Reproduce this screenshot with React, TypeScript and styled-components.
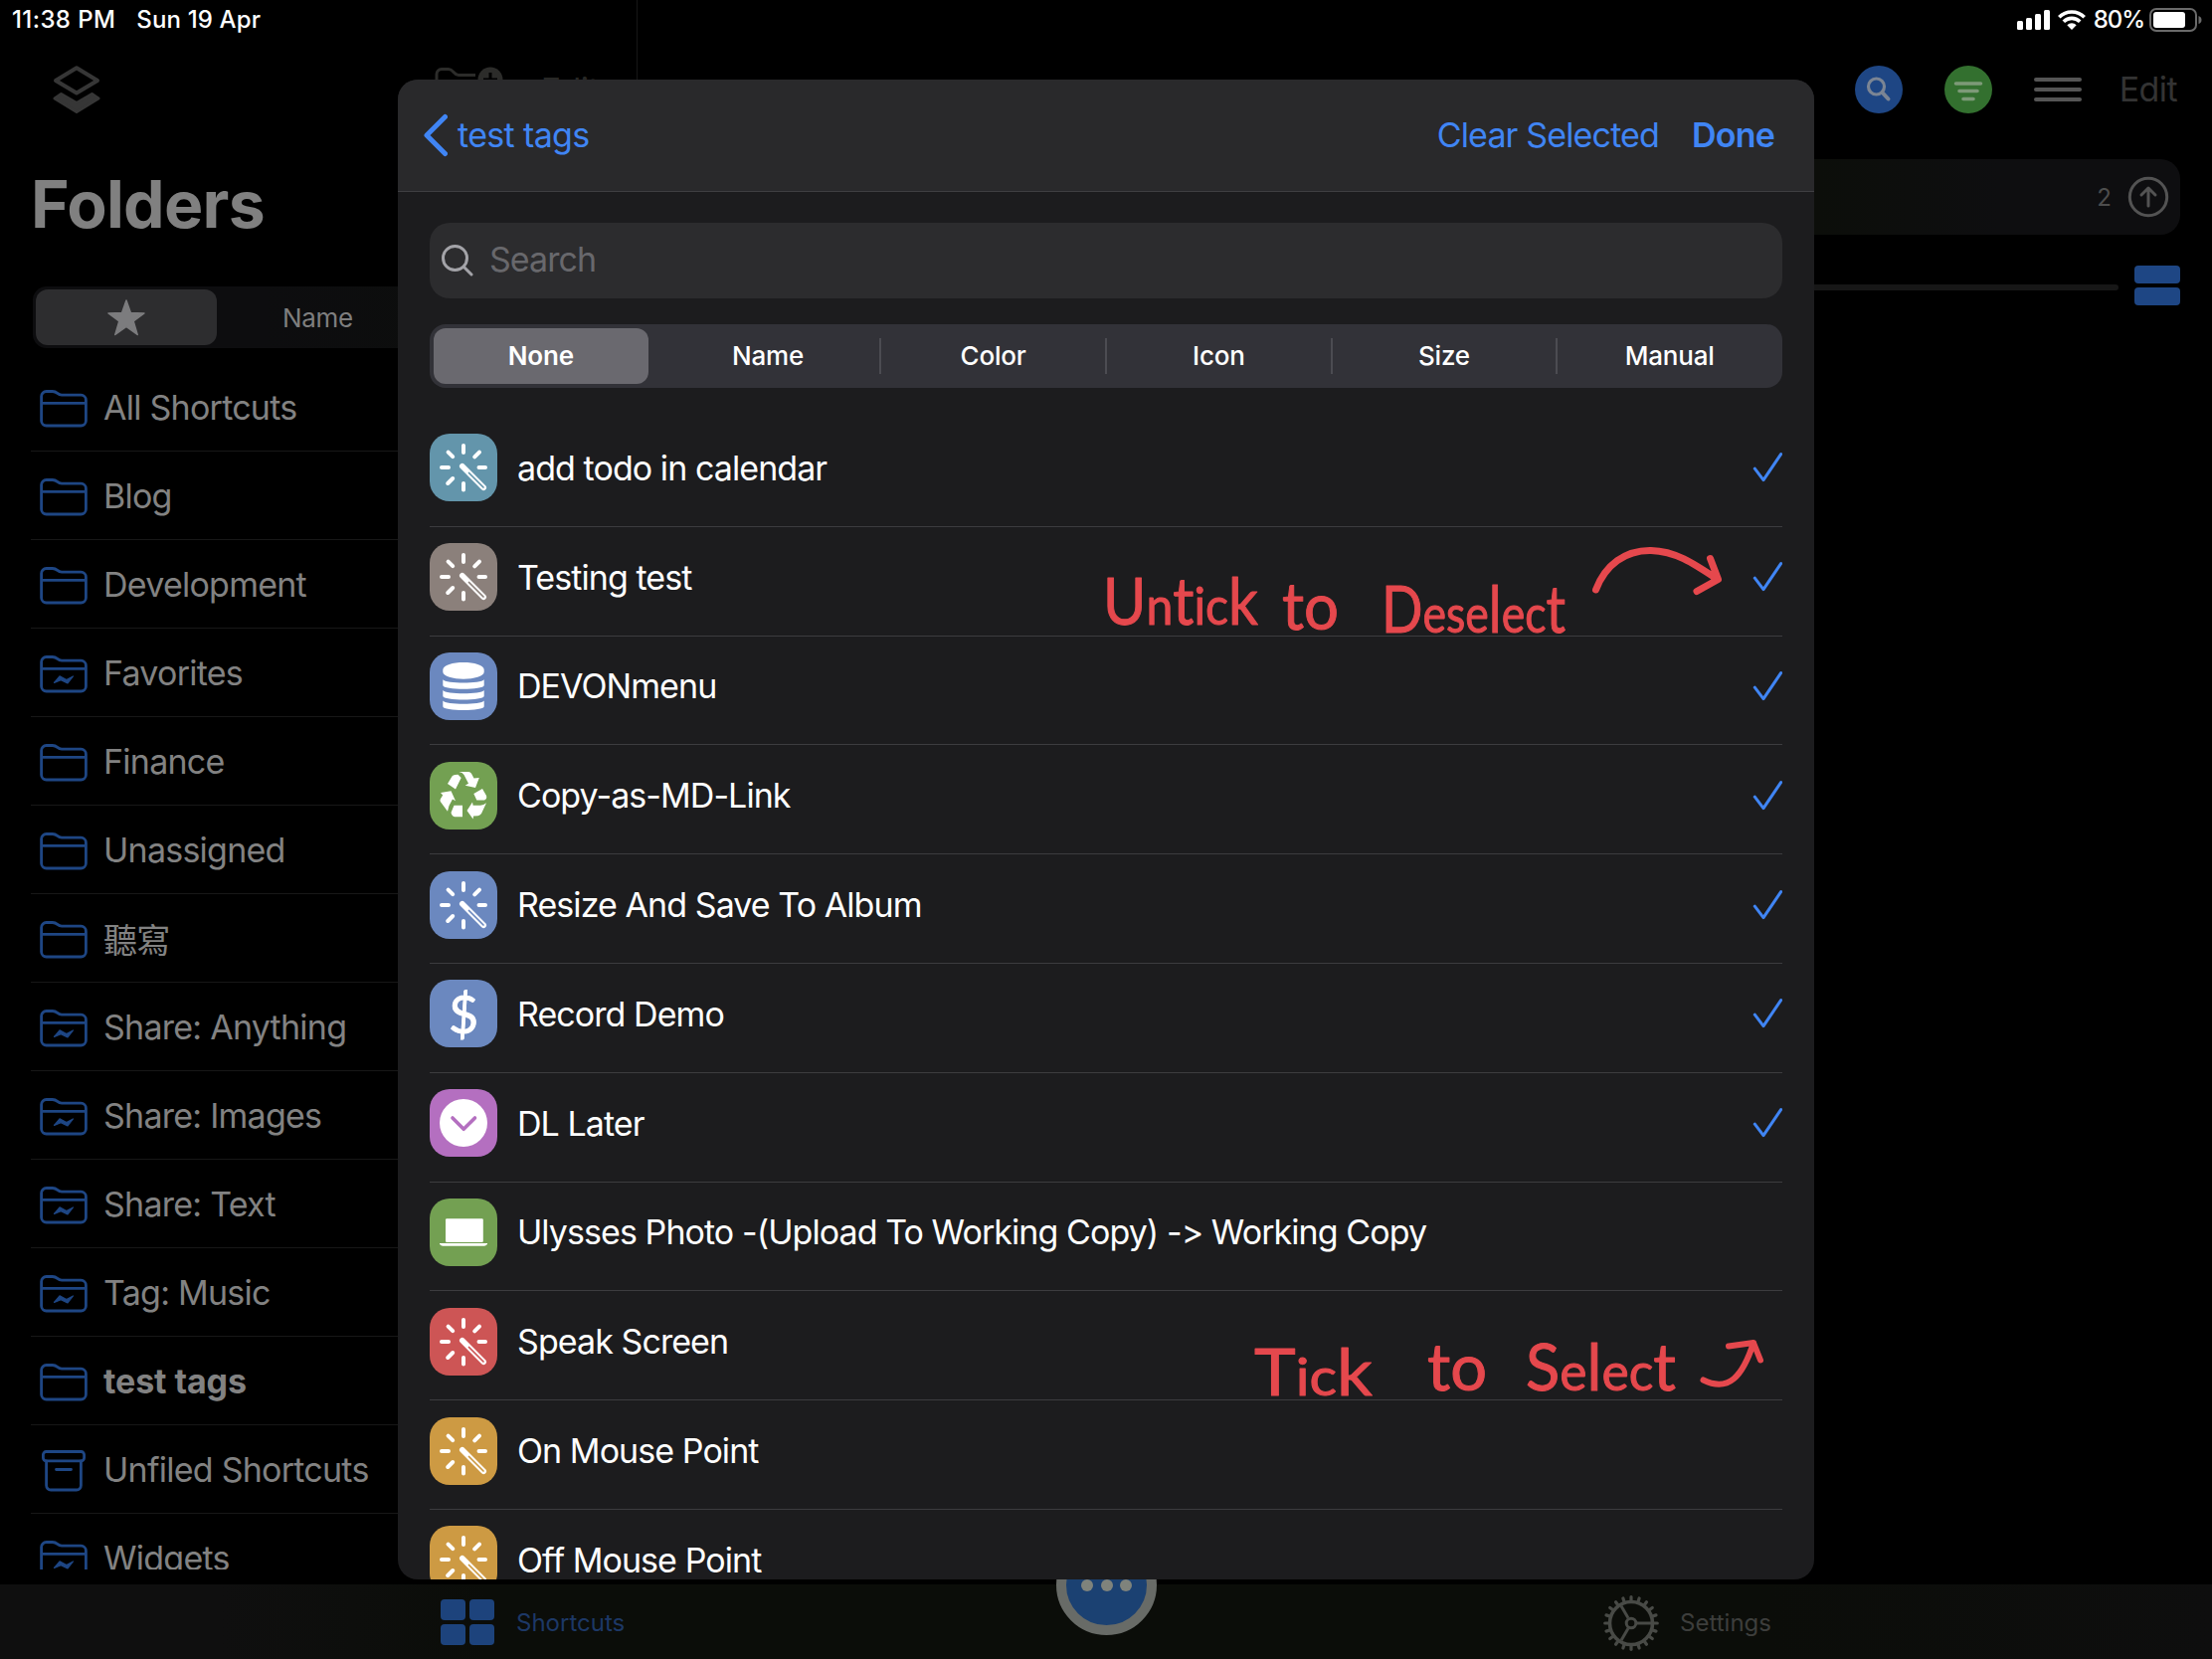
import React from "react";
import styled, { createGlobalStyle } from "styled-components";

const GlobalStyle = createGlobalStyle`
  *, *::before, *::after { box-sizing: border-box; }
  html, body { margin: 0; padding: 0; background: #000; }
  body {
    font-family: Inter, "Liberation Sans", "Noto Sans CJK TC", sans-serif;
    font-feature-settings: "calt" 0;
    overflow: hidden;
  }
  svg { display: block; flex: none; }
`;

const BLUE = "#4085f4";
const DIM_BLUE = "#1e4684";
const RED = "#e5484d";

const Screen = styled.div`
  position: relative;
  display: flex;
  flex-direction: column;
  width: 2224px;
  height: 1668px;
  background: #000;
  overflow: hidden;
`;

/* ---------- status bar ---------- */

const StatusBar = styled.header`
  position: absolute;
  z-index: 2;
  inset: 0 0 auto 0;
  display: flex;
  align-items: center;
  justify-content: space-between;
  height: 40px;
  padding: 0 9px 0 12px;
  color: #fff;
  font-size: 24px;
  font-weight: 500;
`;

const StatusGroup = styled.div<{ $gap: number }>`
  display: flex;
  align-items: center;
  gap: ${(p) => p.$gap}px;
`;

const StatusText = styled.span<{ $spacing?: number }>`
  letter-spacing: ${(p) => p.$spacing ?? 0}px;
  white-space: nowrap;
  padding-bottom: 1px;
`;

/* ---------- page behind the sheet ---------- */

const Columns = styled.div`
  display: flex;
  height: 1593px;
`;

const Sidebar = styled.aside`
  display: flex;
  flex-direction: column;
  width: 641px;
  height: 1578px;
  border-right: 1px solid #161616;
  overflow: hidden;
`;

const SidebarBar = styled.div`
  display: flex;
  align-items: center;
  flex: none;
  height: 140px;
  padding: 40px 38px 0 53px;
`;

const SidebarActions = styled.div`
  display: flex;
  align-items: center;
  gap: 37px;
  margin-left: auto;
  padding-top: 2px;
`;

const DimAction = styled.span<{ $color?: string }>`
  color: ${(p) => p.$color ?? "#333"};
  font-size: 34px;
  letter-spacing: -0.6px;
  line-height: 40px;
`;

const SidebarTitle = styled.h1`
  flex: none;
  margin: 0;
  height: 148px;
  padding: 25px 0 0 31px;
  color: #808080;
  font-size: 66px;
  font-weight: 700;
  line-height: 80px;
  letter-spacing: -0.7px;
`;

const SidebarSegments = styled.div`
  display: flex;
  flex: none;
  width: 576px;
  height: 62px;
  margin: 0 0 15px 33px;
  padding: 3px;
  border-radius: 14px;
  background: linear-gradient(90deg, #0d0d0f 40%, #0c0e0b);
`;

const SidebarSegment = styled.div<{ $active?: boolean }>`
  display: flex;
  align-items: center;
  justify-content: center;
  width: ${(p) => (p.$active ? 182 : 203)}px;
  border-radius: 12px;
  background: ${(p) => (p.$active ? "#2d2d2f" : "transparent")};
  color: #7e7e7e;
  font-size: 26px;
  letter-spacing: -0.3px;
`;

const FolderRow = styled.div<{ $bold?: boolean }>`
  display: flex;
  align-items: center;
  flex: none;
  gap: 16px;
  height: 89px;
  margin-left: 31px;
  padding-left: 9px;
  border-bottom: 1px solid #171717;
  color: #828282;
  font-size: 34px;
  font-weight: ${(p) => (p.$bold ? 700 : 400)};
  letter-spacing: ${(p) => (p.$bold ? -0.1 : -0.75)}px;
  white-space: nowrap;
  svg { margin-top: 4px; }
`;

const Main = styled.main`
  display: flex;
  flex-direction: column;
  flex: 1;
`;

const MainBar = styled.div`
  display: grid;
  grid-template-columns: 1fr auto 1fr;
  align-items: center;
  height: 160px;
  padding: 20px 35px 0 0;
`;

const MainTitle = styled.div`
  grid-column: 2;
  margin-left: 35px;
  padding-top: 2px;
  color: #6d6d6d;
  font-size: 34px;
  font-weight: 600;
  letter-spacing: -0.6px;
`;

const MainActions = styled.div`
  display: flex;
  align-items: center;
  justify-content: flex-end;
`;

const RoundButton = styled.div<{ $color: string }>`
  display: flex;
  width: 48px;
  height: 48px;
  border-radius: 50%;
  margin-right: 42px;
  background: ${(p) => p.$color};
`;

const MenuLines = styled.div`
  display: flex;
  flex-direction: column;
  gap: 6px;
  width: 48px;
  margin-right: 38px;
  span { height: 4px; border-radius: 2px; background: #555; }
`;

const RunBar = styled.div`
  display: flex;
  align-items: center;
  justify-content: flex-end;
  gap: 16px;
  height: 76px;
  margin: 0 32px;
  padding-right: 11px;
  border-radius: 20px;
  background: linear-gradient(90deg, #0c0e0a 76%, #0e0e10 88%);
  color: #4d4d4d;
  font-size: 24px;
`;

const SizeRow = styled.div`
  display: flex;
  align-items: center;
  gap: 16px;
  height: 40px;
  margin: 31px 32px 0;
`;

const Track = styled.div`
  flex: 1;
  height: 6px;
  border-radius: 3px;
  background: #171717;
  margin-top: 4px;
`;

const ViewToggle = styled.div`
  display: flex;
  flex-direction: column;
  gap: 4px;
  width: 46px;
  span { height: 18px; border-radius: 4px; background: ${DIM_BLUE}; }
`;

/* ---------- tab bar ---------- */

const TabBar = styled.nav`
  display: flex;
  align-items: center;
  justify-content: space-between;
  height: 75px;
  padding: 2px 443px 0 443px;
  background: linear-gradient(90deg, #0f0f0f 10%, #0b0d09 22%, #0b0d09 80%, #0e0e0e);
`;

const Tab = styled.div<{ $color: string; $gap: number }>`
  display: flex;
  align-items: center;
  gap: ${(p) => p.$gap}px;
  color: ${(p) => p.$color};
  font-size: 24px;
`;

const TileGrid = styled.div`
  display: grid;
  grid-template-columns: 25px 25px;
  grid-auto-rows: 21px;
  gap: 4px;
  padding-bottom: 1px;
  span { border-radius: 4px; background: #1d437c; }
`;

const MoreButton = styled.div`
  position: absolute;
  left: 1062px;
  top: 1543px;
  display: flex;
  align-items: center;
  justify-content: center;
  gap: 7.5px;
  width: 101px;
  height: 101px;
  border: 10px solid #686b67;
  border-radius: 50%;
  background: #1b4172;
  span { width: 12px; height: 12px; border-radius: 50%; background: #7f837c; }
`;

/* ---------- sheet ---------- */

const Sheet = styled.section`
  position: absolute;
  left: 400px;
  top: 80px;
  display: flex;
  flex-direction: column;
  width: 1424px;
  height: 1508px;
  border-radius: 20px;
  background: #1c1c1e;
  overflow: hidden;
`;

const SheetBar = styled.div`
  display: flex;
  align-items: center;
  flex: none;
  height: 113px;
  padding: 0 40px 0 26px;
  border-bottom: 1px solid #3f3f42;
  background: #29292b;
  color: ${BLUE};
  font-size: 34px;
  white-space: nowrap;
  span { padding-bottom: 1px; }
`;

const BackLink = styled.div`
  display: flex;
  align-items: center;
  gap: 10px;
  margin-right: auto;
  letter-spacing: -0.65px;
`;

const ClearLink = styled.span`
  letter-spacing: -0.85px;
  margin-right: 33px;
`;

const DoneLink = styled.span`
  font-weight: 600;
  letter-spacing: -0.8px;
`;

const SearchField = styled.div`
  display: flex;
  align-items: center;
  flex: none;
  gap: 16px;
  height: 76px;
  margin: 31px 32px 0;
  padding-left: 12px;
  border-radius: 20px;
  background: #2c2c2e;
  color: #68686c;
  font-size: 34px;
  letter-spacing: -0.95px;
  span { padding-bottom: 3px; }
`;

const Segments = styled.div`
  display: grid;
  grid-template-columns: repeat(6, 1fr);
  flex: none;
  height: 64px;
  margin: 26px 32px 30px;
  padding: 4px 0;
  border-radius: 16px;
  background: #323238;
`;

const Segment = styled.div<{ $active?: boolean; $divided?: boolean }>`
  position: relative;
  display: flex;
  align-items: center;
  justify-content: center;
  margin: ${(p) => (p.$active ? "0 7px 0 4px" : "0")};
  padding-bottom: 1px;
  border-radius: ${(p) => (p.$active ? 12 : 0)}px;
  background: ${(p) => (p.$active ? "#6a696f" : "transparent")};
  color: #fff;
  font-size: 26px;
  font-weight: ${(p) => (p.$active ? 600 : 500)};
  letter-spacing: -0.2px;

  &::after {
    content: "";
    display: ${(p) => (p.$divided ? "block" : "none")};
    position: absolute;
    right: -1px;
    top: 10px;
    width: 2px;
    height: 36px;
    background: #4c4c52;
  }
`;

const ShortcutRow = styled.div`
  display: flex;
  align-items: center;
  flex: none;
  height: 109.8px;
  margin: 0 32px;
  padding-bottom: 8px;
  border-bottom: 1px solid #3c3c3f;
`;

const ShortcutIcon = styled.div<{ $color: string }>`
  display: flex;
  align-items: center;
  justify-content: center;
  width: 68px;
  height: 68px;
  border-radius: 20px;
  background: ${(p) => p.$color};
  color: #fff;
`;

const DollarSign = styled.span`
  font-family: Lato, sans-serif;
  font-size: 52px;
  font-weight: 400;
  line-height: 68px;
  -webkit-text-stroke: 0.8px #fff;
`;

const ShortcutName = styled.span`
  flex: 1;
  margin-left: 20px;
  color: #fff;
  font-size: 34px;
  letter-spacing: -0.93px;
  white-space: nowrap;
`;

const Annotations = styled.svg`
  position: absolute;
  inset: 0;
  fill: none;
  stroke: ${RED};
  stroke-width: 7;
  stroke-linecap: round;
  stroke-linejoin: round;
  text {
    fill: ${RED};
    stroke-width: 1;
    font-family: Lato, sans-serif;
    font-size: 65px;
    font-variant-ligatures: none;
  }
`;

const SmallLetter = styled.tspan`
  font-size: 53px;
`;

/* ---------- icons ---------- */

function FolderIcon({ smart }: { smart?: boolean }) {
  return (
    <svg width="48" height="38" viewBox="0 0 48 38" fill="none" stroke={DIM_BLUE} strokeWidth="2.8">
      <path d="M1.6 31V6.5a5 5 0 0 1 5-5h6.2c5.200 0 4.600 3.700 9.200 3.700h19.400a5 5 0 0 1 5 5V31a5 5 0 0 1-5 5H6.600a5 5 0 0 1-5-5zM1.600 13.300h44.800" />
      {smart && (
        <path d="M14.500 27.500 20 20.800l6.800 3.800 6.700-3.600-5.500 7-6.800-3.300z" fill={DIM_BLUE} strokeWidth="1.200" strokeLinejoin="round" />
      )}
    </svg>
  );
}

function ArchiveIcon() {
  return (
    <svg width="48" height="42" viewBox="0 0 48 42" fill="none" stroke={DIM_BLUE} strokeWidth="2.8" strokeLinecap="round">
      <rect x="3.400" y="1.500" width="41.200" height="9.300" rx="3" />
      <path d="M6.600 11v24.500a4.500 4.500 0 0 0 4.500 4.500h25.800a4.500 4.500 0 0 0 4.500-4.500V11M16.500 19.500h15" />
    </svg>
  );
}

function WandGlyph({ color }: { color: string }) {
  return (
    <svg width="68" height="68" viewBox="0 0 68 68" fill="none" stroke="#fff" strokeWidth="4" strokeLinecap="round">
      <path d="M34 12v7M34 50v6.500M12 34h7M49.500 34h6.500M18.600 18.600l4.600 4.600M50 18.600l-4.800 4.800M18.200 50l5-5" />
      <path d="M32.800 32.800 54.200 54.200" strokeWidth="5.600" />
      <path d="M39.500 39.500 54 54" stroke={color} strokeWidth="1.700" />
    </svg>
  );
}

function DatabaseGlyph() {
  const band = "M13.300 27.300C16 31.600 52 31.600 54.700 27.300V33C54.700 38 13.300 38 13.300 33Z";
  return (
    <svg width="68" height="68" viewBox="0 0 68 68" fill="#fff">
      <path d="M13.300 17.500C13.300 7.500 54.700 7.500 54.700 17.500V19.500C54.700 29 13.300 29 13.300 19.500Z" />
      <path d={band} />
      <path d={band} transform="translate(0 10.700)" />
      <path d={band} transform="translate(0 21.300)" />
    </svg>
  );
}

function RecycleGlyph() {
  return (
    <svg width="68" height="68" viewBox="0 0 68 68" fill="#fff">
      <path d="M18 22 22.500 14.500Q23.500 13 25.500 13L28.500 12.700 31.700 16 26 27.500Z" />
      <path d="M29.500 10H39Q41 10 42 11.700L44.500 16.500 49.800 16 46 26 35.700 23.800 39 21.800 34.500 13Q33 10.500 29.500 10Z" />
      <path d="M44.300 32 53 27 57 34Q58 37 55 38.500H47.300Z" />
      <path d="M37.500 49 43 40.500 43.600 43.700H51Q54.500 43.500 57 41.200L52 52Q50.500 54 48.500 54.300L44 54.400 43.600 57.500Z" />
      <path d="M24.500 43.800H33V55.200H25Q22.500 55 21.500 51Z" />
      <path d="M11 31 21.500 29.300 26 39.200 23 37.600 19.500 44 18 49.800 10.800 40Q10 38.500 11 37L13.200 33.500Z" />
    </svg>
  );
}

function ChevronDiscGlyph({ color }: { color: string }) {
  return (
    <svg width="68" height="68" viewBox="0 0 68 68" fill="none">
      <circle cx="34" cy="34" r="24" fill="#fff" />
      <path d="M23 29 34.200 40.300 45.500 29" stroke={color} strokeWidth="3.600" strokeLinecap="round" strokeLinejoin="round" />
    </svg>
  );
}

function LaptopGlyph() {
  return (
    <svg width="68" height="68" viewBox="0 0 68 68" fill="#fff">
      <rect x="16" y="20.300" width="37.800" height="23.700" rx="1.200" />
      <path d="M10 45h48v.6q-.5 2.100-3 2.100H13q-2.500 0-3-2.100z" />
    </svg>
  );
}

function CheckMark() {
  return (
    <svg width="30" height="32" viewBox="0 0 30 32" fill="none" stroke={BLUE} strokeWidth="3" strokeLinecap="round" strokeLinejoin="round">
      <path d="M2.300 17.200 11 28.600 28.600 2.600" />
    </svg>
  );
}

function GearIcon() {
  const teeth = Array.from({ length: 20 }, (_, i) => i * 18);
  return (
    <svg width="56" height="56" viewBox="-28 -28 56 56" fill="none" stroke="#484a46" strokeWidth="3">
      {teeth.map((a) => (
        <path key={a} d="M22 0H26.300" strokeWidth="3.200" strokeLinecap="round" transform={`rotate(${a})`} />
      ))}
      <circle r="21.500" strokeWidth="3.600" />
      <circle r="4.800" />
      <path d="M6 0H20" />
      <path d="M6 0H20" transform="rotate(120)" />
      <path d="M6 0H20" transform="rotate(240)" />
    </svg>
  );
}

function StackLogo() {
  return (
    <svg width="48" height="50" viewBox="0 0 48 50" strokeLinejoin="round">
      <path d="M24 3.200 45 16 24 28.500 3 16Z" fill="none" stroke="#363636" strokeWidth="4" />
      <path d="M8.500 29.500 24 38.500 39.500 29.500 46 34 24 47.500 2 34Z" fill="#363636" stroke="#363636" strokeWidth="3" />
    </svg>
  );
}

function NewFolderIcon() {
  return (
    <svg width="70" height="48" viewBox="0 0 70 48" fill="none" stroke="#2c2c2a" strokeWidth="3">
      <path d="M41 8.500H24c-5 0-5-6-10-6H7a5 5 0 0 0-5 5V38a5 5 0 0 0 5 5h46a5 5 0 0 0 5-5V30" />
      <circle cx="56" cy="13" r="12.500" fill="#2c2c2a" stroke="none" />
      <path d="M56 6v14M49 13h14" stroke="#000" />
    </svg>
  );
}

function SignalIcon() {
  return (
    <svg width="33" height="20" viewBox="0 0 33 20" fill="#fff">
      <rect x="0" y="11" width="6" height="9" rx="1.500" />
      <rect x="9" y="8" width="6" height="12" rx="1.500" />
      <rect x="18" y="4" width="6" height="16" rx="1.500" />
      <rect x="27" y="0" width="6" height="20" rx="1.500" />
    </svg>
  );
}

function WifiIcon() {
  return (
    <svg width="28" height="20" viewBox="0 0 28 20" fill="none" stroke="#fff" strokeWidth="3.600">
      <path d="M1.300 7.200A18 18 0 0 1 26.700 7.200" />
      <path d="M5.800 11.800A11.600 11.600 0 0 1 22.200 11.800" />
      <path d="M14 20 9.300 15.300A6.600 6.600 0 0 1 18.700 15.300Z" fill="#fff" stroke="none" />
    </svg>
  );
}

function BatteryIcon() {
  return (
    <svg width="54" height="24" viewBox="0 0 54 24">
      <rect x="1" y="1" width="46" height="22" rx="6" fill="none" stroke="#6a6a6a" strokeWidth="2" />
      <rect x="4" y="4" width="32" height="16" rx="3" fill="#fff" />
      <path d="M49.500 8Q52.500 9 52.500 12T49.500 16Z" fill="#6a6a6a" />
    </svg>
  );
}

/* ---------- data ---------- */

type FolderKind = "plain" | "smart" | "archive";

const folders: { name: string; kind: FolderKind; current?: boolean }[] = [
  { name: "All Shortcuts", kind: "plain" },
  { name: "Blog", kind: "plain" },
  { name: "Development", kind: "plain" },
  { name: "Favorites", kind: "smart" },
  { name: "Finance", kind: "plain" },
  { name: "Unassigned", kind: "plain" },
  { name: "聽寫", kind: "plain" },
  { name: "Share: Anything", kind: "smart" },
  { name: "Share: Images", kind: "smart" },
  { name: "Share: Text", kind: "smart" },
  { name: "Tag: Music", kind: "smart" },
  { name: "test tags", kind: "plain", current: true },
  { name: "Unfiled Shortcuts", kind: "archive" },
  { name: "Widgets", kind: "smart" },
];

type Glyph = "wand" | "database" | "recycle" | "dollar" | "chevron" | "laptop";

const shortcuts: { name: string; glyph: Glyph; color: string; checked?: boolean }[] = [
  { name: "add todo in calendar", glyph: "wand", color: "#6395ab", checked: true },
  { name: "Testing test", glyph: "wand", color: "#8b807b", checked: true },
  { name: "DEVONmenu", glyph: "database", color: "#6b88bf", checked: true },
  { name: "Copy-as-MD-Link", glyph: "recycle", color: "#73a052", checked: true },
  { name: "Resize And Save To Album", glyph: "wand", color: "#6b88bf", checked: true },
  { name: "Record Demo", glyph: "dollar", color: "#6b88bf", checked: true },
  { name: "DL Later", glyph: "chevron", color: "#b46fc0", checked: true },
  { name: "Ulysses Photo -(Upload To Working Copy) -> Working Copy", glyph: "laptop", color: "#73a052" },
  { name: "Speak Screen", glyph: "wand", color: "#cd5555" },
  { name: "On Mouse Point", glyph: "wand", color: "#cd9a43" },
  { name: "Off Mouse Point", glyph: "wand", color: "#cd9a43" },
];

const sortModes = ["None", "Name", "Color", "Icon", "Size", "Manual"];

function ShortcutGlyph({ glyph, color }: { glyph: Glyph; color: string }) {
  switch (glyph) {
    case "wand":
      return <WandGlyph color={color} />;
    case "database":
      return <DatabaseGlyph />;
    case "recycle":
      return <RecycleGlyph />;
    case "dollar":
      return <DollarSign>$</DollarSign>;
    case "chevron":
      return <ChevronDiscGlyph color={color} />;
    case "laptop":
      return <LaptopGlyph />;
  }
}

export default function App() {
  return (
    <Screen>
      <GlobalStyle />
      <StatusBar>
        <StatusGroup $gap={21}>
          <StatusText $spacing={0.4}>11:38 PM</StatusText>
          <StatusText $spacing={0.15}>Sun 19 Apr</StatusText>
        </StatusGroup>
        <StatusGroup $gap={8}>
          <SignalIcon />
          <WifiIcon />
          <StatusGroup $gap={5}>
            <StatusText $spacing={-1.1}>80%</StatusText>
            <BatteryIcon />
          </StatusGroup>
        </StatusGroup>
      </StatusBar>

      <Columns>
        <Sidebar>
          <SidebarBar>
            <StackLogo />
            <SidebarActions>
              <NewFolderIcon />
              <DimAction $color="#282826">Edit</DimAction>
            </SidebarActions>
          </SidebarBar>
          <SidebarTitle>Folders</SidebarTitle>
          <SidebarSegments>
            <SidebarSegment $active>
              <svg width="38" height="37" viewBox="0 0 38 37" fill="#7c7c7e" stroke="#7c7c7e" strokeWidth="1.500" strokeLinejoin="round">
                <path d="M19 1 23.400 13.600 37 13.900 26.200 22 30.200 35.500 19 27.500 7.800 35.500 11.800 22 1 13.900 14.600 13.600Z" />
              </svg>
            </SidebarSegment>
            <SidebarSegment>Name</SidebarSegment>
          </SidebarSegments>
          {folders.map((f) => (
            <FolderRow key={f.name} $bold={f.current}>
              {f.kind === "archive" ? <ArchiveIcon /> : <FolderIcon smart={f.kind === "smart"} />}
              <span>{f.name}</span>
            </FolderRow>
          ))}
        </Sidebar>

        <Main>
          <MainBar>
            <MainTitle>test tags</MainTitle>
            <MainActions>
              <RoundButton $color="#1e4684">
                <svg width="48" height="48" viewBox="0 0 48 48" fill="none" stroke="#7b8594" strokeWidth="3.200" strokeLinecap="round">
                  <circle cx="21.500" cy="21" r="8" />
                  <path d="M27.500 27 33.500 33.500" strokeWidth="4" />
                </svg>
              </RoundButton>
              <RoundButton $color="#33702f">
                <svg width="48" height="48" viewBox="0 0 48 48" fill="none" stroke="#7d9a78" strokeWidth="3.600" strokeLinecap="round">
                  <path d="M11.500 18h25M15 25.500h18M19 33.500h10" />
                </svg>
              </RoundButton>
              <MenuLines>
                <span />
                <span />
                <span />
              </MenuLines>
              <DimAction>Edit</DimAction>
            </MainActions>
          </MainBar>
          <RunBar>
            <span>2</span>
            <svg width="42" height="42" viewBox="0 0 42 42" fill="none" stroke="#535353" strokeWidth="3" strokeLinecap="round" strokeLinejoin="round">
              <circle cx="21" cy="21" r="18.700" />
              <path d="M21 30V12M14 19l7-7 7 7" />
            </svg>
          </RunBar>
          <SizeRow>
            <Track />
            <ViewToggle>
              <span />
              <span />
            </ViewToggle>
          </SizeRow>
        </Main>
      </Columns>

      <TabBar>
        <Tab $color="#1d3866" $gap={22}>
          <TileGrid>
            <span />
            <span />
            <span />
            <span />
          </TileGrid>
          Shortcuts
        </Tab>
        <Tab $color="#3d3e3c" $gap={21}>
          <GearIcon />
          Settings
        </Tab>
      </TabBar>
      <MoreButton>
        <span />
        <span />
        <span />
      </MoreButton>

      <Sheet>
        <SheetBar>
          <BackLink>
            <svg width="24" height="44" viewBox="0 0 24 44" fill="none" stroke={BLUE} strokeWidth="5" strokeLinecap="round" strokeLinejoin="round">
              <path d="M21.500 3.500 3 22 21.500 40.500" />
            </svg>
            <span>test tags</span>
          </BackLink>
          <ClearLink>Clear Selected</ClearLink>
          <DoneLink>Done</DoneLink>
        </SheetBar>
        <SearchField>
          <svg width="32" height="32" viewBox="0 0 32 32" fill="none" stroke="#a3a3a8" strokeWidth="3" strokeLinecap="round">
            <circle cx="13.500" cy="13.500" r="12" />
            <path d="M22.500 22.500 30 30" />
          </svg>
          <span>Search</span>
        </SearchField>
        <Segments>
          {sortModes.map((m, i) => (
            <Segment key={m} $active={i === 0} $divided={i > 0 && i < sortModes.length - 1}>
              {m}
            </Segment>
          ))}
        </Segments>
        {shortcuts.map((s) => (
          <ShortcutRow key={s.name}>
            <ShortcutIcon $color={s.color}>
              <ShortcutGlyph glyph={s.glyph} color={s.color} />
            </ShortcutIcon>
            <ShortcutName>{s.name}</ShortcutName>
            {s.checked && <CheckMark />}
          </ShortcutRow>
        ))}
      </Sheet>

      <Annotations width="2224" height="1668" viewBox="0 0 2224 1668">
        <text x="1109" y="628" textLength="156" lengthAdjust="spacingAndGlyphs">
          U<SmallLetter>n</SmallLetter>t<SmallLetter>ic</SmallLetter>k
        </text>
        <text x="1289" y="633" textLength="57" lengthAdjust="spacingAndGlyphs">to</text>
        <text x="1389" y="636" textLength="185" lengthAdjust="spacingAndGlyphs">
          D<SmallLetter>ese</SmallLetter>l<SmallLetter>ec</SmallLetter>t
        </text>
        <path d="M1604.500 593C1614 568 1634 553 1660 553.500C1684 554 1702 566 1726 582M1719.500 561.500 1727.500 582.500 1706 594.500" />
        <text x="1261" y="1403" textLength="119" lengthAdjust="spacingAndGlyphs">
          T<SmallLetter>ic</SmallLetter>k
        </text>
        <text x="1435" y="1398" textLength="60" lengthAdjust="spacingAndGlyphs">to</text>
        <text x="1534" y="1398" textLength="151" lengthAdjust="spacingAndGlyphs">
          S<SmallLetter>e</SmallLetter>l<SmallLetter>ec</SmallLetter>t
        </text>
        <path d="M1712.500 1387.500C1738 1400 1752 1384 1763 1350M1738 1353.500 1763 1350 1770 1367.500" strokeWidth="6" />
      </Annotations>
    </Screen>
  );
}
